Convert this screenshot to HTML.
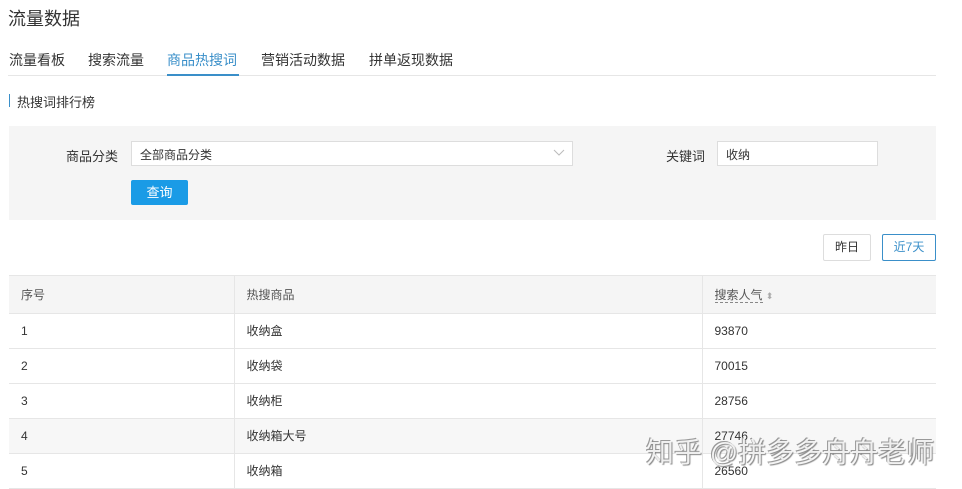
<!DOCTYPE html>
<html><head><meta charset="utf-8"><style>
*{box-sizing:border-box;margin:0;padding:0}
body{width:962px;height:489px;background:#fff;font-family:"Liberation Sans","Noto Sans CJK SC",sans-serif;color:#333;position:relative;overflow:hidden;font-size:13px}
.a{position:absolute;white-space:nowrap}
</style></head><body>
<div class="a" style="left:8px;top:5px;font-size:18px;color:#333">流量数据</div>
<div class="a" style="left:9px;top:50px;font-size:14px">流量看板</div>
<div class="a" style="left:88px;top:50px;font-size:14px">搜索流量</div>
<div class="a" style="left:167px;top:50px;font-size:14px;color:#3a8fc9">商品热搜词</div>
<div class="a" style="left:261px;top:50px;font-size:14px">营销活动数据</div>
<div class="a" style="left:369px;top:50px;font-size:14px">拼单返现数据</div>
<div class="a" style="left:8px;top:75px;width:928px;height:1px;background:#e6e6e6"></div>
<div class="a" style="left:167px;top:74px;width:72px;height:2px;background:#3a8fc9"></div>
<div class="a" style="left:9px;top:94px;width:1px;height:13px;background:#3a8fc9"></div>
<div class="a" style="left:17px;top:92px;font-size:13px">热搜词排行榜</div>
<div class="a" style="left:9px;top:126px;width:927px;height:94px;background:#f5f5f5"></div>
<div class="a" style="left:66px;top:146px;font-size:13px">商品分类</div>
<div class="a" style="left:131px;top:141px;width:442px;height:25px;background:#fff;border:1px solid #ddd;padding:4px 8px;font-size:12px">全部商品分类</div>
<svg class="a" style="left:553px;top:149px" width="12" height="8"><path d="M1 1L6 6L11 1" fill="none" stroke="#bbb" stroke-width="1"/></svg>
<div class="a" style="left:666px;top:146px;font-size:13px">关键词</div>
<div class="a" style="left:717px;top:141px;width:161px;height:25px;background:#fff;border:1px solid #ddd;padding:4px 8px;font-size:12px">收纳</div>
<div class="a" style="left:131px;top:180px;width:57px;height:25px;background:#1a9be6;border-radius:2px;color:#fff;text-align:center;line-height:25px;font-size:13px">查询</div>
<div class="a" style="left:823px;top:234px;width:48px;height:27px;border:1px solid #ddd;border-radius:2px;text-align:center;line-height:25px;font-size:12px">昨日</div>
<div class="a" style="left:882px;top:234px;width:54px;height:27px;border:1px solid #3a8fc9;border-radius:2px;text-align:center;line-height:25px;font-size:12px;color:#3a8fc9">近7天</div>
<div class="a" style="left:9px;top:275px;width:927px;height:214px;border-top:1px solid #e6e6e6">
<table style="border-collapse:collapse;width:927px;font-size:12px;color:#333">
<tr style="background:#f5f5f5;height:37px;color:#555"><td style="width:225px;padding-left:12px;border-right:1px solid #e6e6e6">序号</td><td style="width:468px;padding-left:12px;border-right:1px solid #e6e6e6">热搜商品</td><td style="padding-left:12px"><span style="border-bottom:1px dashed #888">搜索人气</span> <span style="color:#aaa;font-size:9px">⬍</span></td></tr>
<tr style="height:35px;border-top:1px solid #e6e6e6"><td style="padding-left:12px;border-right:1px solid #e6e6e6">1</td><td style="padding-left:12px;border-right:1px solid #e6e6e6">收纳盒</td><td style="padding-left:12px">93870</td></tr>
<tr style="height:35px;border-top:1px solid #e6e6e6"><td style="padding-left:12px;border-right:1px solid #e6e6e6">2</td><td style="padding-left:12px;border-right:1px solid #e6e6e6">收纳袋</td><td style="padding-left:12px">70015</td></tr>
<tr style="height:35px;border-top:1px solid #e6e6e6"><td style="padding-left:12px;border-right:1px solid #e6e6e6">3</td><td style="padding-left:12px;border-right:1px solid #e6e6e6">收纳柜</td><td style="padding-left:12px">28756</td></tr>
<tr style="height:35px;border-top:1px solid #e6e6e6;background:#f7f7f7"><td style="padding-left:12px;border-right:1px solid #e6e6e6">4</td><td style="padding-left:12px;border-right:1px solid #e6e6e6">收纳箱大号</td><td style="padding-left:12px">27746</td></tr>
<tr style="height:35px;border-top:1px solid #e6e6e6;border-bottom:1px solid #e6e6e6"><td style="padding-left:12px;border-right:1px solid #e6e6e6">5</td><td style="padding-left:12px;border-right:1px solid #e6e6e6">收纳箱</td><td style="padding-left:12px">26560</td></tr>
</table></div>
<div class="a" style="left:646px;top:431px;font-size:28px;color:rgba(255,255,255,0.85);text-shadow:1px 1px 1px #888,-1px -1px 0 #999">知乎 @拼多多舟舟老师</div>
</body></html>
